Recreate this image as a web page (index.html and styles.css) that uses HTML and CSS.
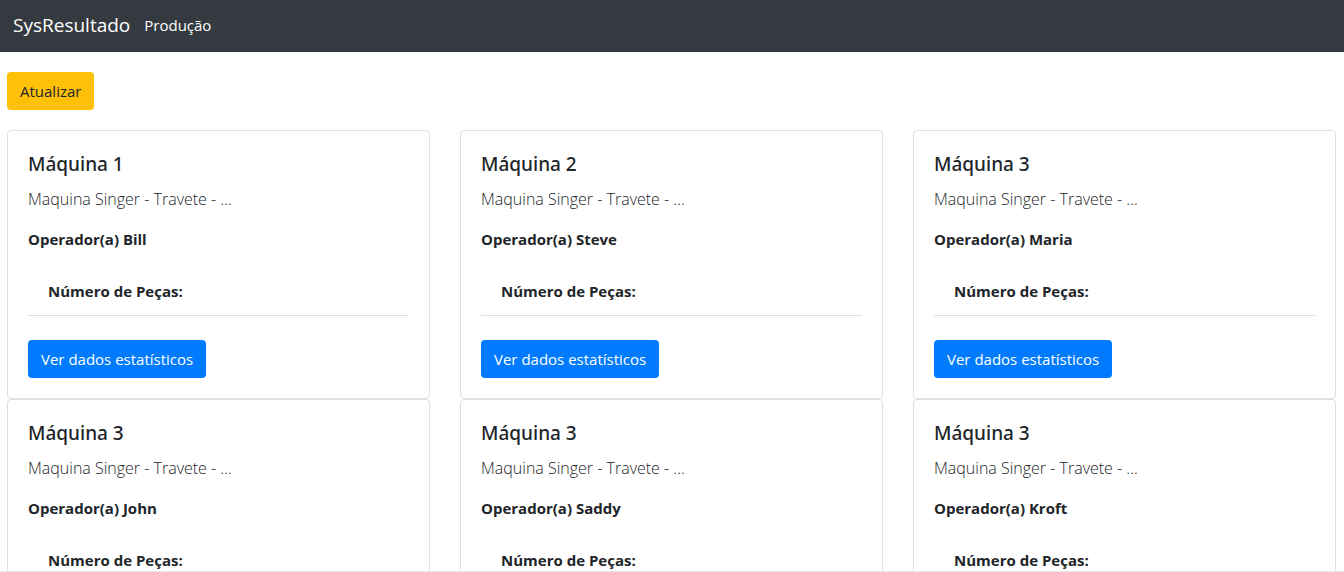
FILE: index.html
```html
<!DOCTYPE html>
<html lang="pt-BR">
<head>
<meta charset="utf-8">
<title>SysResultado</title>
<link rel="stylesheet" href="styles.css">
</head>
<body>
<nav class="navbar">
  <a class="brand" href="#">SysResultado</a>
  <a class="nav-link" href="#">Produção</a>
</nav>
<main class="content">
  <button class="btn btn-warning" type="button">Atualizar</button>
  <div class="grid">
    <article class="card">
      <h5 class="title">Máquina 1</h5>
      <p class="text">Maquina Singer - Travete - ...</p>
      <p class="operator">Operador(a) Bill</p>
      <p class="count">Número de Peças:</p>
      <a class="btn btn-primary" href="#">Ver dados estatísticos</a>
    </article>
    <article class="card">
      <h5 class="title">Máquina 2</h5>
      <p class="text">Maquina Singer - Travete - ...</p>
      <p class="operator">Operador(a) Steve</p>
      <p class="count">Número de Peças:</p>
      <a class="btn btn-primary" href="#">Ver dados estatísticos</a>
    </article>
    <article class="card">
      <h5 class="title">Máquina 3</h5>
      <p class="text">Maquina Singer - Travete - ...</p>
      <p class="operator">Operador(a) Maria</p>
      <p class="count">Número de Peças:</p>
      <a class="btn btn-primary" href="#">Ver dados estatísticos</a>
    </article>
    <article class="card">
      <h5 class="title">Máquina 3</h5>
      <p class="text">Maquina Singer - Travete - ...</p>
      <p class="operator">Operador(a) John</p>
      <p class="count">Número de Peças:</p>
      <a class="btn btn-primary" href="#">Ver dados estatísticos</a>
    </article>
    <article class="card">
      <h5 class="title">Máquina 3</h5>
      <p class="text">Maquina Singer - Travete - ...</p>
      <p class="operator">Operador(a) Saddy</p>
      <p class="count">Número de Peças:</p>
      <a class="btn btn-primary" href="#">Ver dados estatísticos</a>
    </article>
    <article class="card">
      <h5 class="title">Máquina 3</h5>
      <p class="text">Maquina Singer - Travete - ...</p>
      <p class="operator">Operador(a) Kroft</p>
      <p class="count">Número de Peças:</p>
      <a class="btn btn-primary" href="#">Ver dados estatísticos</a>
    </article>
  </div>
</main>
</body>
</html>
```

FILE: styles.css
```css
* { box-sizing: border-box; }
body {
  display: flex;
  flex-direction: column;
  height: 100vh;
  margin: 0;
  background: #fff;
  color: #212529;
  font: 400 15px/24px "Open Sans", "Noto Sans", sans-serif;
}
.navbar {
  display: flex;
  flex: none;
  align-items: center;
  gap: 14px;
  height: 52px;
  padding: 0 13px 3px;
  background: #343a40;
}
.navbar a { color: #fff; text-decoration: none; }
.navbar .brand { font-size: 19px; }
.content {
  flex: 1;
  min-height: 0;
  padding: 20px 8px 0 7px;
  overflow-y: auto;
  scrollbar-width: none;
  border-bottom: 1px solid #e9e9e9;
}
.btn {
  display: inline-block;
  padding: 6px 12px;
  border: 1px solid transparent;
  border-radius: 4px;
  font: inherit;
  text-decoration: none;
}
.btn-warning { background: #ffc107; color: #212529; }
.btn-primary { background: #007bff; color: #fff; }
.grid {
  display: grid;
  grid-template-columns: repeat(3, 1fr);
  column-gap: 30px;
  margin-top: 20px;
}
.card {
  padding: 20px;
  border: 1px solid #dfdfdf;
  border-radius: 4px;
}
.title {
  margin: 0 0 10px;
  font-family: "Noto Sans", "Open Sans", sans-serif;
  font-size: 19px;
  font-weight: 500;
  line-height: 26px;
}
.text { margin: 0 0 16px; font-size: 16px; font-weight: 300; }
.operator { margin: 0 0 16px; font-weight: 700; }
.count {
  margin: 0 0 24px;
  padding: 12px 20px;
  border-bottom: 1px solid #dfdfdf;
  font-weight: 700;
}
```
